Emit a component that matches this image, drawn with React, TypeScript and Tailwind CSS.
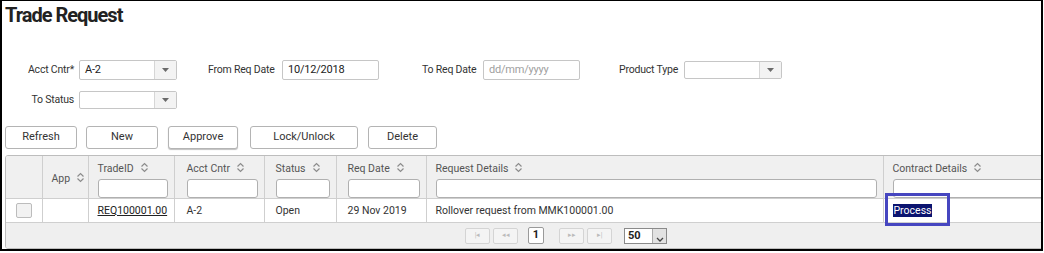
import React from 'react';

const SortIcon = () => (
  <svg width="9" height="11" viewBox="0 0 9 11" className="inline-block ml-[6px] align-[-1px]">
    <path d="M1.5 4.5 L4.5 1.5 L7.5 4.5 M1.5 6.5 L4.5 9.5 L7.5 6.5" fill="none" stroke="#8c8c8c" strokeWidth="1.2" />
  </svg>
);

const Caret = () => (
  <svg width="7" height="4" viewBox="0 0 7 4">
    <path d="M0 0 L7 0 L3.5 4 Z" fill="#6a6a6a" />
  </svg>
);

const Select = ({ value, className }: { value?: string; className: string }) => (
  <div className={`flex border border-[#c6c6c6] rounded-[2px] bg-white ${className}`}>
    <div className="flex-1 flex items-center pl-[5px] text-[11px] text-[#222]">{value}</div>
    <div className="w-[22px] flex items-center justify-center bg-[#f3f3f3] border-l border-[#d6d6d6]">
      <Caret />
    </div>
  </div>
);

const Field = ({ value, placeholder, className }: { value?: string; placeholder?: string; className: string }) => (
  <div className={`flex items-center border border-[#c6c6c6] rounded-[2px] bg-white pl-[5px] text-[11px] ${className}`}>
    {value ? <span className="text-[#222]">{value}</span> : <span className="text-[#a0a0a0]">{placeholder}</span>}
  </div>
);

const Btn = ({ label, className }: { label: string; className: string }) => (
  <button className={`h-[23px] rounded-[3px] border border-[#b4b4b4] bg-white text-[11px] text-[#333] ${className}`}>
    {label}
  </button>
);

const FilterInput = () => (
  <div className="mt-[4px] h-[19px] rounded-[3px] border border-[#b0b0b0] bg-white" />
);

const HeadCell = ({ label, className = '' }: { label: string; className?: string }) => (
  <th className={`border-r border-[#cfcfcf] align-top pt-[6px] pl-[9px] pr-[6px] font-normal text-left ${className}`}>
    <div className="text-[10.5px] text-[#555] leading-[13px] whitespace-nowrap">
      {label}
      <SortIcon />
    </div>
    <FilterInput />
  </th>
);

export default function App() {
  return (
    <div className="w-[1043px] h-[251px] border-l-2 border-r-2 border-b-2 border-t border-black bg-white overflow-hidden font-['Roboto',sans-serif]">
      <h1 className="pl-[3px] pt-[2px] text-[20px] font-bold leading-[24px] text-[#222] tracking-[-1px]">Trade Request</h1>

      <div className="mt-[33px] flex items-center h-[20px] text-[10.5px] text-[#333] whitespace-nowrap tracking-[-0.2px]">
        <div className="w-[72px] text-right">Acct Cntr*</div>
        <Select value="A-2" className="ml-[5px] w-[98px] h-[20px]" />
        <div className="ml-[31px] w-[66px]">From Req Date</div>
        <Field value="10/12/2018" className="ml-[8px] w-[97px] h-[20px]" />
        <div className="ml-[43px] w-[54px]">To Req Date</div>
        <Field placeholder="dd/mm/yyyy" className="ml-[7px] w-[97px] h-[20px]" />
        <div className="ml-[39px] w-[58px]">Product Type</div>
        <Select className="ml-[7px] w-[98px] h-[18px]" />
      </div>

      <div className="mt-[11px] flex items-center h-[18px] text-[10.5px] text-[#333] tracking-[-0.2px]">
        <div className="w-[72px] text-right">To Status</div>
        <Select className="ml-[5px] w-[98px] h-[18px]" />
      </div>

      <div className="mt-[17px] ml-[3px] flex">
        <Btn label="Refresh" className="w-[72px]" />
        <Btn label="New" className="ml-[9px] w-[72px]" />
        <Btn label="Approve" className="ml-[10px] w-[70px] shadow-[0_1px_1px_rgba(0,0,0,0.25)]" />
        <Btn label="Lock/Unlock" className="ml-[12px] w-[108px]" />
        <Btn label="Delete" className="ml-[10px] w-[69px]" />
      </div>

      <div className="mt-[6px] ml-[3px] w-[1100px] rounded-[3px] border border-[#bdbdbd] overflow-hidden">
        <table className="table-fixed border-collapse w-[1100px]">
          <colgroup>
            <col className="w-[36px]" />
            <col className="w-[46px]" />
            <col className="w-[86px]" />
            <col className="w-[90px]" />
            <col className="w-[72px]" />
            <col className="w-[90px]" />
            <col className="w-[457px]" />
            <col />
          </colgroup>
          <thead>
            <tr className="h-[41px] bg-[#f0f0f0] border-b border-[#cfcfcf]">
              <th className="border-r border-[#cfcfcf]" />
              <th className="border-r border-[#cfcfcf] align-middle pl-[9px] font-normal text-left">
                <span className="text-[10.5px] text-[#555] whitespace-nowrap">
                  App
                  <SortIcon />
                </span>
              </th>
              <HeadCell label="TradeID" />
              <HeadCell label="Acct Cntr" className="pl-[12px]" />
              <HeadCell label="Status" className="pl-[11px]" />
              <HeadCell label="Req Date" className="pl-[11px]" />
              <HeadCell label="Request Details" />
              <HeadCell label="Contract Details" />
            </tr>
          </thead>
          <tbody>
            <tr className="h-[24px] bg-white border-b border-[#cfcfcf] text-[10.5px] text-[#333]">
              <td className="border-r border-[#cfcfcf]">
                <div className="ml-[10px] w-[16px] h-[15px] rounded-[2px] border border-[#bcbcbc] bg-[#f2f2f2]" />
              </td>
              <td className="border-r border-[#cfcfcf]" />
              <td className="border-r border-[#cfcfcf] pl-[9px]">
                <span className="underline text-[#222]">REQ100001.00</span>
              </td>
              <td className="border-r border-[#cfcfcf] pl-[12px]">A-2</td>
              <td className="border-r border-[#cfcfcf] pl-[11px]">Open</td>
              <td className="border-r border-[#cfcfcf] pl-[11px]">29 Nov 2019</td>
              <td className="border-r border-[#cfcfcf] pl-[9px]">Rollover request from MMK100001.00</td>
              <td className="pl-[9px]">
                <div className="relative">
                  <span className="bg-[#0b1470] text-white px-px">Process</span>
                  <div className="absolute left-[-8px] top-[-10px] w-[65px] h-[33px] border-[3px] border-[#4646c0]" />
                </div>
              </td>
            </tr>
          </tbody>
        </table>
        <div className="h-[25px] bg-[#efefef] flex items-center">
          <div className="ml-[459px] flex items-center gap-[3px]">
            <div className="w-[25px] h-[16px] rounded-[2px] border border-[#d4d4d4] bg-[#f4f4f4] flex items-center justify-center text-[7px] text-[#bbb]">|◂</div>
            <div className="w-[25px] h-[16px] rounded-[2px] border border-[#d4d4d4] bg-[#f4f4f4] flex items-center justify-center text-[7px] text-[#bbb]">◂◂</div>
            <div className="ml-[7px] w-[16px] h-[17px] rounded-[2px] border border-[#9a9a9a] bg-white flex items-center justify-center text-[11px] font-bold text-[#222]">1</div>
            <div className="ml-[12px] w-[25px] h-[16px] rounded-[2px] border border-[#d4d4d4] bg-[#f4f4f4] flex items-center justify-center text-[7px] text-[#bbb]">▸▸</div>
            <div className="w-[25px] h-[16px] rounded-[2px] border border-[#d4d4d4] bg-[#f4f4f4] flex items-center justify-center text-[7px] text-[#bbb]">▸|</div>
            <div className="ml-[9px] w-[43px] h-[16px] flex border border-[#8a8a8a] bg-white">
              <div className="flex-1 pl-[3px] text-[11px] font-bold leading-[14px] text-[#222]">50</div>
              <div className="w-[14px] bg-[#e2e2e2] border-l border-[#aaa] flex items-end justify-center pb-[1px]">
                <svg width="8" height="5" viewBox="0 0 8 5">
                  <path d="M1 1 L4 4 L7 1" fill="none" stroke="#444" strokeWidth="1.3" />
                </svg>
              </div>
            </div>
          </div>
        </div>
      </div>
    </div>
  );
}
